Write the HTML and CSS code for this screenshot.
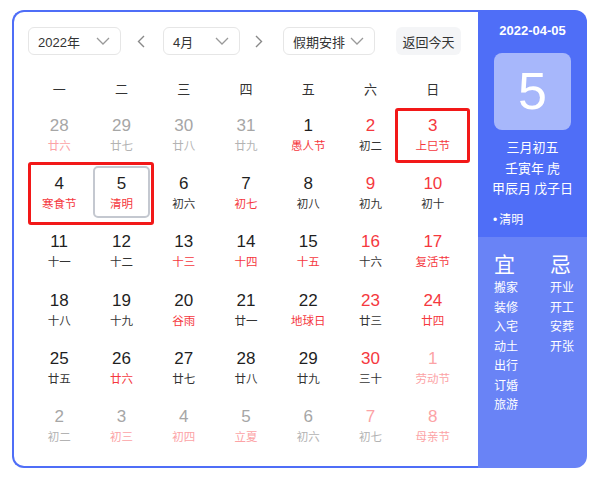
FILE: index.html
```html
<!DOCTYPE html>
<html lang="zh">
<head>
<meta charset="utf-8">
<link rel="stylesheet" href="styles.css">
</head>
<body>
<div class="card">
  <div class="main">
    <div class="toolbar">
      <div class="select year"><span>2022年</span><svg class="chev" width="14" height="8" viewBox="0 0 14 8"><path d="M1 1l6 6 6-6" fill="none" stroke="#999" stroke-width="1.3"/></svg></div>
      <div class="arrow"><svg width="8" height="13" viewBox="0 0 8 13"><path d="M7 1L1.5 6.5 7 12" fill="none" stroke="#888" stroke-width="1.4"/></svg></div>
      <div class="select month"><span>4月</span><svg class="chev" width="14" height="8" viewBox="0 0 14 8"><path d="M1 1l6 6 6-6" fill="none" stroke="#999" stroke-width="1.3"/></svg></div>
      <div class="arrow next"><svg width="8" height="13" viewBox="0 0 8 13"><path d="M1 1l5.5 5.5L1 12" fill="none" stroke="#888" stroke-width="1.4"/></svg></div>
      <div class="select holiday"><span>假期安排</span><svg class="chev" width="14" height="8" viewBox="0 0 14 8"><path d="M1 1l6 6 6-6" fill="none" stroke="#999" stroke-width="1.3"/></svg></div>
      <div class="today-btn">返回今天</div>
    </div>
    <div class="weekdays">
      <div>一</div><div>二</div><div>三</div><div>四</div><div>五</div><div>六</div><div>日</div>
    </div>
    <div class="days">
      <div class="day other"><span class="num">28</span><span class="lunar fred">廿六</span></div>
      <div class="day other"><span class="num">29</span><span class="lunar">廿七</span></div>
      <div class="day other"><span class="num">30</span><span class="lunar">廿八</span></div>
      <div class="day other"><span class="num">31</span><span class="lunar">廿九</span></div>
      <div class="day"><span class="num">1</span><span class="lunar red">愚人节</span></div>
      <div class="day"><span class="num red">2</span><span class="lunar">初二</span></div>
      <div class="day"><span class="num red">3</span><span class="lunar red">上巳节</span></div>

      <div class="day"><span class="num">4</span><span class="lunar red">寒食节</span></div>
      <div class="day selected"><span class="num">5</span><span class="lunar red">清明</span></div>
      <div class="day"><span class="num">6</span><span class="lunar">初六</span></div>
      <div class="day"><span class="num">7</span><span class="lunar red">初七</span></div>
      <div class="day"><span class="num">8</span><span class="lunar">初八</span></div>
      <div class="day"><span class="num red">9</span><span class="lunar">初九</span></div>
      <div class="day"><span class="num red">10</span><span class="lunar">初十</span></div>

      <div class="day"><span class="num">11</span><span class="lunar">十一</span></div>
      <div class="day"><span class="num">12</span><span class="lunar">十二</span></div>
      <div class="day"><span class="num">13</span><span class="lunar red">十三</span></div>
      <div class="day"><span class="num">14</span><span class="lunar red">十四</span></div>
      <div class="day"><span class="num">15</span><span class="lunar red">十五</span></div>
      <div class="day"><span class="num red">16</span><span class="lunar">十六</span></div>
      <div class="day"><span class="num red">17</span><span class="lunar red">复活节</span></div>

      <div class="day"><span class="num">18</span><span class="lunar">十八</span></div>
      <div class="day"><span class="num">19</span><span class="lunar">十九</span></div>
      <div class="day"><span class="num">20</span><span class="lunar red">谷雨</span></div>
      <div class="day"><span class="num">21</span><span class="lunar">廿一</span></div>
      <div class="day"><span class="num">22</span><span class="lunar red">地球日</span></div>
      <div class="day"><span class="num red">23</span><span class="lunar">廿三</span></div>
      <div class="day"><span class="num red">24</span><span class="lunar red">廿四</span></div>

      <div class="day"><span class="num">25</span><span class="lunar">廿五</span></div>
      <div class="day"><span class="num">26</span><span class="lunar red">廿六</span></div>
      <div class="day"><span class="num">27</span><span class="lunar">廿七</span></div>
      <div class="day"><span class="num">28</span><span class="lunar">廿八</span></div>
      <div class="day"><span class="num">29</span><span class="lunar">廿九</span></div>
      <div class="day"><span class="num red">30</span><span class="lunar">三十</span></div>
      <div class="day other"><span class="num fred">1</span><span class="lunar fred">劳动节</span></div>

      <div class="day other"><span class="num">2</span><span class="lunar">初二</span></div>
      <div class="day other"><span class="num">3</span><span class="lunar fred">初三</span></div>
      <div class="day other"><span class="num">4</span><span class="lunar fred">初四</span></div>
      <div class="day other"><span class="num">5</span><span class="lunar fred">立夏</span></div>
      <div class="day other"><span class="num">6</span><span class="lunar">初六</span></div>
      <div class="day other"><span class="num fred">7</span><span class="lunar">初七</span></div>
      <div class="day other"><span class="num fred">8</span><span class="lunar fred">母亲节</span></div>

      <div class="mark mark-sun"></div>
      <div class="mark mark-pair"></div>
    </div>
  </div>
  <div class="side">
    <div class="side-top">
      <div class="date">2022-04-05</div>
      <div class="bigday">5</div>
      <div class="lunar-info">
        <div>三月初五</div>
        <div>壬寅年 虎</div>
        <div>甲辰月 戊子日</div>
      </div>
      <div class="term"><span class="dot">•</span>清明</div>
    </div>
    <div class="side-bottom">
      <div class="col">
        <div class="head">宜</div>
        <div>搬家</div><div>装修</div><div>入宅</div><div>动土</div><div>出行</div><div>订婚</div><div>旅游</div>
      </div>
      <div class="col">
        <div class="head">忌</div>
        <div>开业</div><div>开工</div><div>安葬</div><div>开张</div>
      </div>
    </div>
  </div>
</div>
</body>
</html>
```
FILE: styles.css
```css
* { box-sizing: border-box; }
html, body { margin: 0; background: #fff; }
body {
  padding: 10px 0 0 12px;
  font-family: "Liberation Sans", "Noto Sans CJK SC", sans-serif;
  color: #222;
}
.card {
  display: flex;
  width: 575px;
  height: 458px;
}
.main {
  width: 466px;
  border: 2px solid #4f6ef7;
  border-right: none;
  border-radius: 12px 0 0 12px;
  padding: 15px 14px 0 14px;
}
.toolbar {
  display: flex;
  align-items: center;
  height: 28px;
}
.select {
  height: 28px;
  border: 1px solid #e6e6e6;
  border-radius: 6px;
  display: flex;
  align-items: center;
  justify-content: space-between;
  padding: 0 10px 0 9px;
  font-size: 13px;
  color: #333;
}
.select .chev { display: block; }
.year { width: 93px; }
.month { width: 77px; }
.holiday { width: 92px; }
.arrow {
  width: 42px;
  display: flex;
  justify-content: center;
  align-items: center;
  padding-right: 2px;
}
.arrow.next { width: 43px; padding-right: 6px; padding-left: 0; }
.today-btn {
  margin-left: 21px;
  width: 65px;
  height: 28px;
  border-radius: 6px;
  background: #f4f5f7;
  font-size: 13px;
  color: #333;
  display: flex;
  align-items: center;
  justify-content: center;
}
.weekdays {
  margin-top: 16px;
  height: 34px;
  display: grid;
  grid-template-columns: repeat(7, 1fr);
  align-items: center;
  text-align: center;
  font-size: 13px;
  color: #333;
  font-family: "Noto Sans CJK SC", sans-serif;
}
.days {
  position: relative;
  display: grid;
  grid-template-columns: repeat(7, 1fr);
  grid-auto-rows: 58.2px;
}
.day {
  display: flex;
  flex-direction: column;
  align-items: center;
  justify-content: center;
  margin: 3px 3px;
  border-radius: 5px;
  border: 2px solid transparent;
}
.day.selected { border-color: #c4c8d0; }
.num {
  font-size: 17px;
  line-height: 20px;
  color: #1f1f1f;
}
.lunar {
  font-size: 11.5px;
  line-height: 14px;
  margin-top: 2px;
  color: #333;
  font-family: "Noto Sans CJK SC", sans-serif;
}
.other .num { color: #a6a6a6; }
.other .lunar { color: #b3b3b3; }
.red, .other .red { color: #f5383e; }
.fred, .other .fred { color: #fca3a6; }
.mark {
  position: absolute;
  border: 3px solid #f21818;
  border-radius: 3px;
}
.mark-sun { left: 367px; top: 3px; width: 75px; height: 55px; }
.mark-pair { left: 0; top: 57px; width: 126px; height: 63px; }

.side {
  width: 109px;
  border-radius: 0 12px 12px 0;
  overflow: hidden;
  display: flex;
  flex-direction: column;
  color: #fff;
  font-family: "Noto Sans CJK SC", sans-serif;
}
.side-top {
  height: 227px;
  background: #4f6ef7;
  padding-top: 12px;
  display: flex;
  flex-direction: column;
  align-items: center;
}
.date {
  font-family: "Liberation Sans", sans-serif;
  font-weight: bold;
  font-size: 13px;
  line-height: 18px;
}
.bigday {
  margin-top: 13px;
  width: 77px;
  height: 77px;
  border-radius: 8px;
  background: rgba(255, 255, 255, 0.5);
  font-family: "Liberation Sans", sans-serif;
  font-size: 52px;
  line-height: 77px;
  text-align: center;
}
.lunar-info {
  margin-top: 7px;
  font-size: 13px;
  line-height: 20.5px;
  text-align: center;
}
.term {
  align-self: flex-start;
  margin-top: 10px;
  padding-left: 15px;
  font-size: 12px;
  line-height: 20px;
}
.term .dot { font-family: "Liberation Sans", sans-serif; margin-right: 2px; }
.side-bottom {
  flex: 1;
  background: #6983f6;
  display: flex;
  padding: 15px 0 0 16px;
}
.col {
  flex: 0 0 56px;
  font-size: 12px;
  line-height: 19.5px;
}
.col .head {
  font-size: 21px;
  line-height: 22px;
  margin-bottom: 3px;
}
```
